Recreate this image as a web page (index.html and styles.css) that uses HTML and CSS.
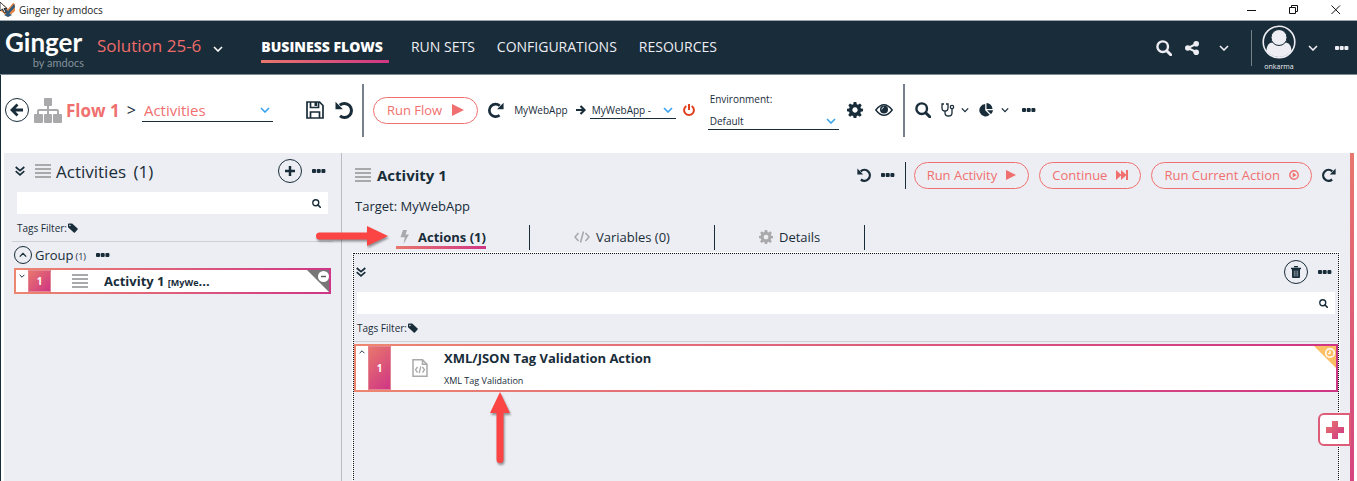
FILE: index.html
```
<!DOCTYPE html>
<html lang="en">
<head>
<meta charset="utf-8">
<title>Ginger by amdocs</title>
<link rel="stylesheet" href="styles.css">
</head>
<body>
<svg class="defs" aria-hidden="true">
  <defs>
    <linearGradient id="brand" x1="0" y1="0" x2="1" y2="1"><stop offset="0" stop-color="#e8776c"/><stop offset="1" stop-color="#cf3585"/></linearGradient>
  </defs>
  <symbol id="search" viewBox="0 0 16 16"><circle cx="6.7" cy="6.7" r="5.3" fill="none" stroke="currentColor" stroke-width="2.4"/><path d="M10.7 10.7l4 4" stroke="currentColor" stroke-width="3" stroke-linecap="round"/></symbol>
  <symbol id="chevron" viewBox="0 0 10 6"><path d="M1 1l4 4 4-4" fill="none" stroke="currentColor" stroke-width="1.6"/></symbol>
  <symbol id="double" viewBox="0 0 10 10"><path d="M.7 1l4.300 3.600L9.300 1M.7 5.200L5 8.800l4.300-3.600" fill="none" stroke="currentColor" stroke-width="1.700"/></symbol>
  <symbol id="dots" viewBox="0 0 14 4"><rect width="4" height="4" rx="1"/><rect x="4.700" width="4" height="4" rx="1"/><rect x="9.400" width="4" height="4" rx="1"/></symbol>
  <symbol id="bars" viewBox="0 0 16 14"><path d="M0 0h16v2H0zM0 4h16v2H0zM0 8h16v2H0zM0 12h16v2H0z"/></symbol>
  <symbol id="undo" viewBox="0 0 18 18"><path d="M4.800 4.200A7 7 0 1 1 5 14.800" fill="none" stroke="currentColor" stroke-width="3"/><path d="M.5.8v7.400h7.400z"/></symbol>
  <symbol id="redo" viewBox="0 0 18 18"><path d="M13.200 4.200A7 7 0 1 0 13 14.800" fill="none" stroke="currentColor" stroke-width="3"/><path d="M17.500.8v7.400h-7.400z"/></symbol>
  <symbol id="play" viewBox="0 0 12 12"><path d="M0 0l12 6-12 6z"/></symbol>
  <symbol id="plus" viewBox="0 0 12 12"><path d="M4.500 0h3v4.500H12v3H7.500V12h-3V7.500H0v-3h4.500z"/></symbol>
  <symbol id="tag" viewBox="0 0 12 12"><path fill-rule="evenodd" d="M0 1.500Q0 .6 1 .6h4l6.500 6q.6.7 0 1.300L8.300 11.300q-.7.6-1.400 0L0 5.200zM2.300 2a.8.8 0 1 0 .01 0z"/></symbol>
  <symbol id="gear" viewBox="0 0 18 18"><path fill-rule="evenodd" d="M7.500 0h3l.5 2.600 1.400.6L14.600 1.700l2 2-1.500 2.200.6 1.500L18 7.600v2.900l-2.400.5-.6 1.400 1.500 2.200-2 2-2.200-1.500-1.400.6-.4 2.400h-3L7 15.700l-1.400-.6-2.200 1.500-2-2 1.500-2.200-.6-1.400L0 10.500V7.600l2.400-.4.600-1.400-1.500-2.100 2-2 2.200 1.500L7 2.600zM9 6a3 3 0 1 0 .01 0z"/></symbol>
</svg>

<header class="titlebar">
  <svg class="app-mark" viewBox="0 0 16 16"><path d="M1 5l3-2 4 4 5-6 2 1v7l-7 6-7-6z" fill="#e48746"/><path d="M1 7l3-2 4 4 6-7 1 3-7 8zM4 13l4-2 4 2-4 2z" fill="#315b7d"/><path d="M0 0v9l2.500-2 2 4 1.500-1-2-3.500h3z" fill="#fff" stroke="#111" stroke-width=".8"/></svg>
  <span class="app-title">Ginger by amdocs</span>
  <div class="window-controls">
    <button aria-label="Minimize"><svg width="10" height="10"><path d="M0 5.500h9" stroke="#111"/></svg></button>
    <button aria-label="Restore"><svg width="10" height="10"><path d="M.5 2.500h6v6h-6zM2.500 2V.5h6v6H7" fill="none" stroke="#111"/></svg></button>
    <button aria-label="Close"><svg width="10" height="10"><path d="M.5.5l8.500 8.500M9 .5L.5 9" stroke="#111"/></svg></button>
  </div>
</header>

<nav class="navbar">
  <div class="logo"><strong>Ginger</strong><small>by amdocs</small></div>
  <button class="solution">Solution 25-6 <svg class="chev"><use href="#chevron"/></svg></button>
  <div class="nav-links">
    <a class="active" href="#flows">BUSINESS FLOWS</a>
    <a href="#runsets">RUN SETS</a>
    <a href="#config">CONFIGURATIONS</a>
    <a href="#resources">RESOURCES</a>
  </div>
  <div class="nav-tools">
    <button aria-label="Search"><svg class="i16"><use href="#search"/></svg></button>
    <button class="share" aria-label="Share"><svg class="i14" viewBox="0 0 14 14"><path d="M11 3L3 7l8 4" fill="none" stroke="currentColor" stroke-width="2"/><circle cx="11.200" cy="2.800" r="2.800"/><circle cx="2.800" cy="7" r="2.800"/><circle cx="11.200" cy="11.200" r="2.800"/></svg></button>
    <button class="share-more" aria-label="Share options"><svg class="chev"><use href="#chevron"/></svg></button>
    <button class="user"><svg class="avatar" viewBox="0 0 34 34"><circle cx="17" cy="17" r="15.800" fill="none" stroke="currentColor" stroke-width="1.600"/><path d="M4.500 26c0-5 2.500-8.500 6-8.500q6.500 4 13 0c3.500 0 6 3.500 6 8.500-6 8-19 8-25 0z"/><circle cx="17" cy="12.500" r="8" stroke="#182c39"/></svg><span>onkarma</span></button>
    <button class="user-more" aria-label="User options"><svg class="chev"><use href="#chevron"/></svg></button>
    <button class="nav-more" aria-label="More"><svg class="dots"><use href="#dots"/></svg></button>
  </div>
</nav>

<section class="toolbar" aria-label="Flow tools">
  <button class="round back" aria-label="Back"><svg class="i14" viewBox="0 0 14 14"><path d="M7.500 1.500L2 7l5.500 5.500M2.500 7H13" fill="none" stroke="currentColor" stroke-width="2.800"/></svg></button>
  <svg class="sitemap" viewBox="0 0 28 25"><path d="M11 0h6q1 0 1 1v6q0 1-1 1h-2v3h8q2 0 2 2v3h2q1 0 1 1v7q0 1-1 1h-7q-1 0-1-1v-7q0-1 1-1h3v-3h-8v3h2q1 0 1 1v7q0 1-1 1h-6q-1 0-1-1v-7q0-1 1-1h2v-3H5v3h3q1 0 1 1v7q0 1-1 1H1q-1 0-1-1v-7q0-1 1-1h2v-3q0-2 2-2h8V8h-2q-1 0-1-1V1q0-1 1-1z"/></svg>
  <h1>Flow 1</h1><span class="crumb">&gt;</span>
  <div class="select view-select"><select aria-label="View"><option>Activities</option></select><svg class="chev"><use href="#chevron"/></svg></div>
  <button class="save" aria-label="Save"><svg class="i18" viewBox="0 0 18 18"><path d="M1 1h12.500L17 4.500V17H1zM4.500 1v5.500h8V1M4.500 17v-6h9v6" fill="none" stroke="currentColor" stroke-width="1.700"/><path d="M8.500 1h2.500v4H8.500z"/></svg></button>
  <button class="undo" aria-label="Undo"><svg class="i18"><use href="#undo"/></svg></button>
  <span class="rule"></span>
  <button class="pill run-flow">Run Flow <svg class="i12"><use href="#play"/></svg></button>
  <button class="reset" aria-label="Reset"><svg class="i16"><use href="#redo"/></svg></button>
  <label class="app-name" for="agent">MyWebApp</label>
  <svg class="to" viewBox="0 0 10 10"><path d="M4.500 1l4 4-4 4M0 5h8" fill="none" stroke="currentColor" stroke-width="2.200"/></svg>
  <div class="select agent"><select id="agent"><option>MyWebApp -</option></select><svg class="chev"><use href="#chevron"/></svg></div>
  <button class="power" aria-label="Stop agent"><svg class="i12" viewBox="0 0 12 12"><path d="M3.300 2a4.900 4.900 0 1 0 5.400 0M6 0v6" fill="none" stroke="currentColor" stroke-width="2"/></svg></button>
  <div class="env"><label for="env">Environment:</label><div class="select"><select id="env"><option>Default</option></select><svg class="chev"><use href="#chevron"/></svg></div></div>
  <button class="config" aria-label="Settings"><svg class="i16"><use href="#gear"/></svg></button>
  <button class="view" aria-label="Preview"><svg class="eye" viewBox="0 0 18 12"><path d="M.8 6Q9-4.500 17.200 6 9 16.500.8 6z" fill="none" stroke="currentColor" stroke-width="1.400"/><circle cx="9" cy="5.500" r="4"/><path d="M6.800 5.500Q7 3.300 9 3" fill="none" stroke="#fff" stroke-width=".8"/></svg></button>
  <span class="rule rule-right"></span>
  <button class="find" aria-label="Find"><svg class="i16"><use href="#search"/></svg></button>
  <button class="analyze" aria-label="Analyze"><svg class="i14" viewBox="0 0 14 14"><path d="M3 1H1v4q0 3 3 3t3-3V1H5M4 8v2q0 3 3.500 3t3.500-3V5.500" fill="none" stroke="currentColor" stroke-width="1.300"/><circle cx="11" cy="4" r="1.700" fill="#fff" stroke="currentColor" stroke-width="1.200"/></svg><svg class="chev"><use href="#chevron"/></svg></button>
  <button class="report" aria-label="Reports"><svg class="i14" viewBox="0 0 14 14"><path d="M6.200 1v6.300l4.500 4.500A6.200 6.200 0 1 1 6.200 1zM7.500 0A6.200 6.200 0 0 1 13.500 6h-6zM8 7.300h6q-.2 2.400-2 4z"/></svg><svg class="chev"><use href="#chevron"/></svg></button>
  <button class="more" aria-label="More"><svg class="dots"><use href="#dots"/></svg></button>
</section>

<main class="workspace">
  <aside class="sidebar">
    <div class="side-head">
      <button aria-label="Expand all"><svg class="i10"><use href="#double"/></svg></button>
      <svg class="bars"><use href="#bars"/></svg>
      <h2>Activities <span>(1)</span></h2>
      <button class="round add" aria-label="Add activity"><svg class="i10"><use href="#plus"/></svg></button>
      <button aria-label="More"><svg class="dots"><use href="#dots"/></svg></button>
    </div>
    <div class="searchbox"><input type="text" aria-label="Search activities"><svg class="i9"><use href="#search"/></svg></div>
    <div class="tags">Tags Filter:<svg class="i10"><use href="#tag"/></svg></div>
    <div class="group">
      <button class="round toggle" aria-label="Collapse group"><svg class="chev up"><use href="#chevron"/></svg></button>
      <h3>Group</h3><small>(1)</small>
      <button class="group-more" aria-label="Group options"><svg class="dots"><use href="#dots"/></svg></button>
    </div>
    <article class="card side-card">
      <svg class="fold"><use href="#chevron"/></svg>
      <span class="index">1</span>
      <svg class="bars"><use href="#bars"/></svg>
      <strong>Activity 1 <small>[MyWe</small>...</strong>
      <svg class="corner" viewBox="0 0 22 22"><path d="M0 0h22v22z" fill="#777"/><circle cx="16.500" cy="6.500" r="5.500" fill="#fff"/><path d="M14 6.500h5" stroke="#555" stroke-width="1.400"/></svg>
    </article>
  </aside>

  <section class="detail">
    <div class="detail-head">
      <svg class="bars"><use href="#bars"/></svg>
      <h2>Activity 1</h2>
      <div class="detail-tools">
        <button aria-label="Undo"><svg class="i14"><use href="#undo"/></svg></button>
        <button aria-label="More"><svg class="dots"><use href="#dots"/></svg></button>
        <span class="rule rule-short"></span>
        <button class="pill">Run Activity <svg class="i10"><use href="#play"/></svg></button>
        <button class="pill">Continue <svg class="skip" viewBox="0 0 12 10"><path d="M0 0l5 4.500V0l5 4.500V0h2v10h-2V5.500L5 10V5.500L0 10z"/></svg></button>
        <button class="pill">Run Current Action <svg class="i10" viewBox="0 0 10 10"><circle cx="5" cy="5" r="4.200" fill="none" stroke="currentColor" stroke-width="1.400"/><path d="M3.700 2.500L7.500 5 3.700 7.500z"/></svg></button>
        <button aria-label="Reset"><svg class="i14"><use href="#redo"/></svg></button>
      </div>
    </div>
    <p class="target">Target: MyWebApp</p>
    <div class="tabs" role="tablist">
      <button class="tab" role="tab" aria-selected="true"><span><svg class="bolt" viewBox="0 0 9 14"><path d="M3 0h4L5.500 4.500H9L3.500 14 4.800 7.200H.5z"/></svg>Actions (1)</span></button>
      <button class="tab" role="tab" aria-selected="false"><span><svg class="code" viewBox="0 0 16 12"><path d="M4.500 2L1 6l3.500 4M11.500 2L15 6l-3.500 4M9.500.5l-3 11" fill="none" stroke="currentColor" stroke-width="1.600"/></svg>Variables (0)</span></button>
      <button class="tab" role="tab" aria-selected="false"><span><svg class="i14"><use href="#gear"/></svg>Details</span></button>
    </div>
    <div class="panel">
      <div class="panel-head">
        <button aria-label="Expand all"><svg class="i10"><use href="#double"/></svg></button>
        <button class="round trash" aria-label="Delete"><svg class="i12" viewBox="0 0 12 12"><path d="M4 .5h4M1 2.500h10" fill="none" stroke="currentColor" stroke-width="1.600"/><path d="M2 3h8v8q0 1-1 1H3q-1 0-1-1z"/><path d="M4.300 4.500v6M6 4.500v6M7.700 4.500v6" stroke="#edeef3" stroke-width=".5"/></svg></button>
        <button aria-label="More"><svg class="dots"><use href="#dots"/></svg></button>
      </div>
      <div class="searchbox"><input type="text" aria-label="Search actions"><svg class="i9"><use href="#search"/></svg></div>
      <div class="tags">Tags Filter:<svg class="i10"><use href="#tag"/></svg></div>
      <article class="card action-card">
        <svg class="fold up"><use href="#chevron"/></svg>
        <span class="index">1</span>
        <svg class="file" viewBox="0 0 16 18"><path d="M1 .8h9.500L15 5.200v12H1zM10.500.8v4.500H15" fill="none" stroke="currentColor" stroke-width="1.500"/><path d="M5.500 8L3.500 10.800l2 2.700M10.500 8l2 2.800-2 2.700M8.800 7.500l-1.600 6.500" fill="none" stroke="currentColor" stroke-width="1.300"/></svg>
        <div class="action-text"><strong>XML/JSON Tag Validation Action</strong><p>XML Tag Validation</p></div>
        <svg class="corner" viewBox="0 0 22 22"><path d="M0 0h22v22z" fill="#fdbf66"/><circle cx="16" cy="7" r="4.300" fill="none" stroke="#fff" stroke-width="1.500"/><path d="M16 4.500V7.500h-2" fill="none" stroke="#fff" stroke-width="1.200"/></svg>
      </article>
      <svg class="arrow-up" viewBox="0 0 24 76"><path d="M12 1l10 21h-6.500v46.500a3.500 3.500 0 0 1-7 0V22H2z"/></svg>
    </div>
    <svg class="arrow-right" viewBox="0 0 76 24"><path d="M74 12L53 22v-6.500H5.500a3.500 3.500 0 0 1 0-7H53V2z"/></svg>
  </section>
  <div class="strip"><button aria-label="Add action"><svg width="18" height="18" viewBox="0 0 12 12"><path fill="url(#brand)" d="M4 0h4v4h4v4H8v4H4V8H0V4h4z"/></svg></button></div>
</main>
</body>
</html>
```
FILE: styles.css
```
:root { --ink: #182c39; --coral: #f0706f; --grey: #a9a9ab; --bg: #edeef3; --grad: linear-gradient(135deg, #e8776c, #cf3585); }
* { box-sizing: border-box; }
body { margin: 0; min-height: 100vh; display: flex; flex-direction: column; background: #fff; color: var(--ink); font-family: "Open Sans", "Noto Sans", sans-serif; font-size: 12px; overflow-x: hidden; }
svg { fill: currentColor; flex: none; display: block; }
.defs { position: absolute; width: 0; height: 0; }
button { border: 0; padding: 0; margin: 0; background: none; color: inherit; font: inherit; display: flex; align-items: center; flex: none; cursor: pointer; white-space: nowrap; }
h1, h2, h3, p { margin: 0; white-space: nowrap; }
a { color: inherit; text-decoration: none; }

.i9 { width: 9px; height: 9px; }
.i10 { width: 10px; height: 10px; }
.i12 { width: 12px; height: 12px; }
.i14 { width: 14px; height: 14px; }
.i16 { width: 16px; height: 16px; }
.i18 { width: 18px; height: 18px; }
.chev { width: 10px; height: 6px; }
.dots { width: 14px; height: 4px; }
.skip { width: 12px; height: 10px; }
.bars { width: 16px; height: 14px; color: var(--grey); }
.up { transform: rotate(180deg); }
.round { border: 1px solid var(--ink); border-radius: 50%; justify-content: center; width: 24px; height: 24px; }
.rule { width: 2px; height: 53px; background: #75808a; flex: none; }

.titlebar { height: 21px; border-bottom: 1px solid #9da5aa; display: flex; align-items: center; color: #222; line-height: 15px; }
.app-mark { width: 16px; height: 16px; }
.app-title { margin-left: 3px; font-size: 10px; }
.window-controls { margin-left: auto; display: flex; gap: 32px; padding-right: 16px; }

.navbar { height: 54px; background: var(--ink); border-bottom: 1px solid #7c8b93; color: #ededf3; display: flex; align-items: center; }
.logo { width: 79px; margin-left: 5px; padding-top: 2px; display: flex; flex-direction: column; font-family: Lato, sans-serif; }
.logo strong { font-size: 26px; line-height: 29px; color: #fff; }
.logo small { align-self: flex-end; font-size: 11px; line-height: 12px; color: #84909a; }
.solution { margin: 0 0 4px 13px; color: #ee6b6b; font-size: 17px; gap: 12px; }
.solution svg { color: #fff; margin-top: 6px; }
.nav-links { display: flex; gap: 22px; margin-left: 38px; font-size: 14px; line-height: 20px; padding-top: 1px; }
.nav-links a { padding: 3px 0; border-bottom: 3px solid transparent; white-space: nowrap; }
.nav-links .active { font-weight: 800; color: #fff; padding-right: 6px; border-image: linear-gradient(90deg, #e8776c, #cf3585) 1; }
.nav-tools { margin-left: auto; display: flex; align-items: center; padding-right: 8px; }
.share { margin-left: 13px; }
.share-more { margin-left: 20px; }
.user { margin-left: 22px; height: 36px; border-left: 1px solid #75808a; flex-direction: column; justify-content: center; padding-left: 10px; font-size: 7px; line-height: 8px; gap: 4px; }
.avatar { width: 34px; height: 34px; }
.user-more { margin-left: 12px; }
.nav-more { margin-left: 17px; }

.toolbar { min-height: 78px; padding: 0 4px 8px; border-left: 1px solid var(--ink); display: flex; align-items: center; }
.sitemap { width: 28px; height: 25px; color: var(--grey); margin-left: 5px; }
.toolbar h1 { font-size: 17px; color: var(--coral); margin-left: 4px; }
.crumb { font-size: 16px; margin: 0 6px 0 7px; }
.select { border-bottom: 1px solid var(--ink); display: flex; align-items: center; position: relative; }
.select select { appearance: none; border: 0; background: none; font: inherit; color: inherit; width: 100%; padding: 0 16px 0 2px; outline: 0; }
.select .chev { position: absolute; right: 3px; color: #38a3ee; pointer-events: none; }
.view-select { width: 131px; font-size: 15px; height: 24px; color: var(--coral); }
.save { margin-left: 33px; }
.undo { margin: 0 9px 0 11px; }
.pill { height: 27px; border: 1px solid var(--coral); border-radius: 14px; color: var(--coral); font-size: 13px; padding: 0 13px; gap: 10px; }
.run-flow { margin-left: 9px; }
.reset { margin-left: 10px; }
.app-name { margin-left: 10px; font-size: 10px; }
.to { width: 10px; height: 10px; margin: 0 4px 0 8px; }
.agent { width: 86px; height: 17px; font-size: 10px; }
.power { margin-left: 7px; color: #e2401f; }
.env { width: 131px; margin-left: 13px; padding-top: 2px; font-size: 10px; display: flex; flex-direction: column; gap: 7px; }
.env label { padding-left: 2px; }
.env .select { height: 17px; }
.config { margin-left: 8px; }
.view { margin: 0 10px 0 12px; }
.eye { width: 18px; height: 12px; }
.find { margin-left: 10px; }
.analyze { margin-left: 10px; gap: 6px; }
.report { margin-left: 10px; gap: 8px; }
.more { margin-left: 13px; }
.toolbar .analyze .chev, .toolbar .report .chev { width: 8px; }

.workspace { flex: 1; display: flex; border-left: 1px solid var(--ink); padding: 0 3px; position: relative; }
.sidebar { width: 338px; flex: none; background: var(--bg); border-right: 1px solid #b9bcc2; padding: 0 10px; }
.side-head { height: 39px; display: flex; align-items: center; gap: 10px; padding: 0 5px 3px 1px; }
.side-head h2 { font-size: 17px; font-weight: 400; margin-left: -5px; }
.side-head span { margin-left: 3px; }
.add { margin-left: auto; }
.searchbox { height: 22px; background: #fff; display: flex; align-items: center; padding-right: 7px; margin: 0 3px; }
.searchbox input { flex: 1; min-width: 0; border: 0; outline: 0; height: 20px; background: none; }
.tags { height: 28px; margin: 0 -2px; padding: 0 5px; border-bottom: 1px solid #cfd0d5; display: flex; align-items: center; gap: 1px; font-size: 10px; }
.group { height: 26px; display: flex; align-items: center; }
.toggle { width: 18px; height: 18px; }
.toggle .chev { width: 8px; }
.group h3 { font-size: 13px; font-weight: 400; margin-left: 3px; }
.group small { font-size: 9px; margin: 2px 10px 0 2px; }
.card { display: flex; align-items: center; background: #fff; border: 2px solid; border-image: linear-gradient(90deg, #ed8670, #cf3585) 1; position: relative; }
.side-card { height: 26px; }
.fold { width: 6px; height: 4px; align-self: flex-start; margin: 4px 3px 0; }
.index { align-self: stretch; width: 23px; background: var(--grad); border: 1px solid #e58492; color: #fff; font-size: 10px; font-weight: 700; display: flex; align-items: center; justify-content: center; }
.side-card .bars { margin: 0 16px 0 21px; }
.side-card strong { font-size: 13px; white-space: nowrap; }
.side-card small { font-size: 9px; }
.corner { position: absolute; top: 0; right: 0; width: 22px; height: 22px; }

.detail { flex: 1; min-width: 0; background: var(--bg); padding: 0 11px; position: relative; display: flex; flex-direction: column; }
.detail-head { height: 44px; display: flex; align-items: center; padding-left: 2px; }
.detail-head h2 { font-size: 15px; margin-left: 6px; }
.detail-tools { display: flex; align-items: center; margin-left: auto; gap: 10px; padding-right: 3px; }
.detail-tools .pill { padding: 0 12px; gap: 9px; }
.rule-short { width: 1px; height: 27px; background: var(--ink); }
.detail-tools .rule-short { margin-right: -2px; }
.target { font-size: 13px; line-height: 18px; padding-left: 2px; }
.tabs { display: flex; height: 32px; align-items: center; margin-top: 6px; }
.tab { height: 25px; padding: 0 44px; border-right: 1px solid var(--ink); font-size: 13px; }
.tab span { display: flex; align-items: center; gap: 6px; height: 24px; padding-top: 3px; border-bottom: 3px solid transparent; }
.tab svg { color: var(--grey); }
.tab[aria-selected="true"] { font-weight: 700; padding: 0 43px; }
.tab[aria-selected="true"] span { border-image: linear-gradient(90deg, #e8776c, #cf3585) 1; padding-left: 4px; gap: 9px; }
.bolt { width: 9px; height: 14px; }
.code { width: 16px; height: 12px; }
.panel { flex: 1; border: 1px dotted #111; border-bottom: 0; outline: 1px solid #fff; position: relative; margin-bottom: -1px; }
.panel-head { height: 38px; display: flex; align-items: center; gap: 10px; padding: 0 6px 3px 2px; }
.trash { margin-left: auto; }
.panel .tags { margin: 0 0 2px; padding: 0 3px; }
.action-card { height: 48px; }
.file { width: 16px; height: 18px; color: var(--grey); margin: 0 16px 0 21px; }
.action-text strong { display: block; font-size: 13px; line-height: 18px; white-space: nowrap; }
.action-text p { font-size: 9px; line-height: 14px; margin-top: 7px; }
.strip { width: 4px; flex: none; background: linear-gradient(#e8776c, #cf3585 130%); position: relative; }
.strip button { position: absolute; right: 3px; top: 260px; width: 33px; height: 33px; justify-content: center; background: #fff; border: 2px solid #dd5d78; border-radius: 6px 0 0 6px; }
.arrow-right, .arrow-up { position: absolute; fill: #fb4444; filter: drop-shadow(1px 2px 1px #0006); }
.arrow-right { left: -28px; top: 71px; width: 76px; height: 24px; }
.arrow-up { left: 134px; top: 137px; width: 24px; height: 76px; }
```
